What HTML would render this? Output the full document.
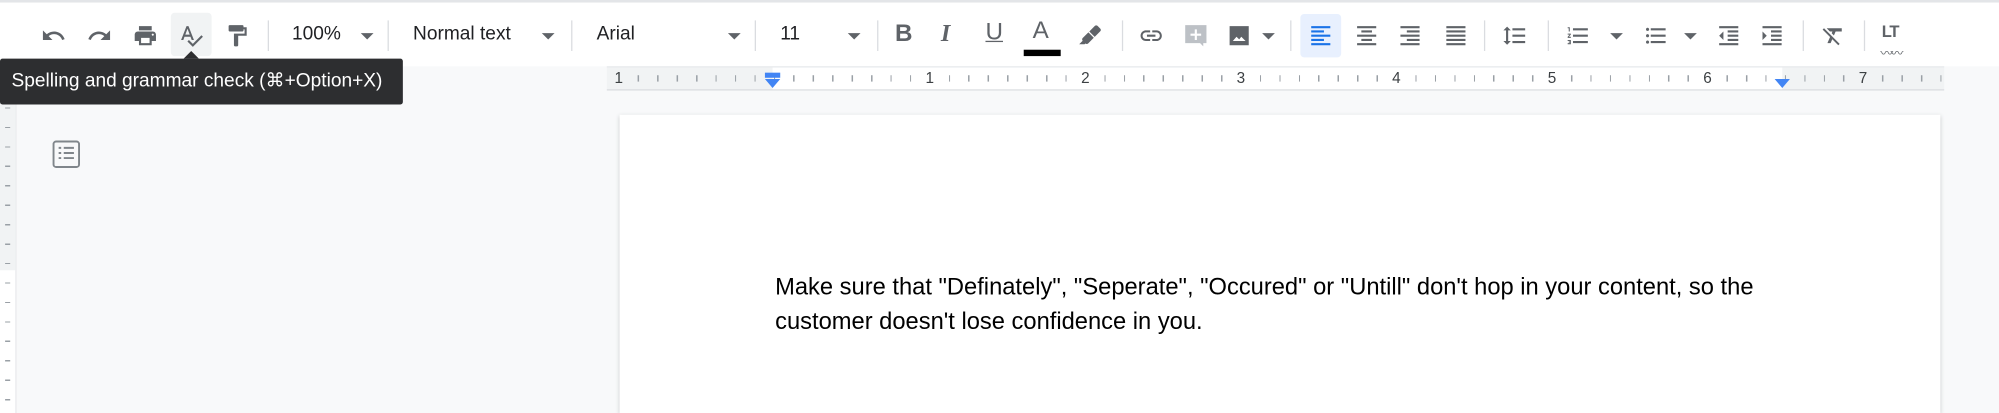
<!DOCTYPE html>
<html><head><meta charset="utf-8"><style>
html,body{margin:0;padding:0;width:1999px;height:413px;overflow:hidden;background:#f8f9fa;}
#w{position:absolute;left:0;top:0;width:1568px;height:324px;transform:scale(1.27487);transform-origin:0 0;font-family:"Liberation Sans",Arial,sans-serif;background:#f8f9fa;overflow:hidden}
.tb{position:absolute;left:0;top:0;width:1568px;height:52px;background:#fff;border-top:2px solid #e3e5e8;box-sizing:border-box}
.ic{position:absolute;top:16px;width:20px;height:20px;fill:#5f6368}
.sep{position:absolute;top:14px;width:1px;height:24px;background:#dadce0}
.t{position:absolute;top:16px;font-size:15px;color:#202124}
.dd{position:absolute;top:24px;width:0;height:0;border-left:5px solid transparent;border-right:5px solid transparent;border-top:5px solid #5f6368}
.ruler{position:absolute;top:52px;left:476px;width:1049px;height:17px;background:#f1f3f4;border-bottom:1px solid #dadce0;border-top:1px solid #e8eaed}
.rw{position:absolute;left:130px;top:0;width:792px;height:17px;background:#fff}
.ticks{position:absolute;left:0;top:6px;width:1049px;height:5px;background:repeating-linear-gradient(90deg,transparent 0,transparent 14.25px,#9aa0a6 14.25px,#9aa0a6 15.25px);background-position:10px 0}
.rl{position:absolute;top:1px;font-size:12px;color:#3c4043;background:inherit}
.page{position:absolute;left:486px;top:90px;width:1036px;height:234px;background:#fff;box-shadow:0 1px 3px rgba(60,64,67,.25)}
.txt{position:absolute;left:608px;top:211px;font-size:18.6px;line-height:27px;color:#000;width:900px}
.tip{position:absolute;left:0;top:46px;width:316px;height:36px;background:#2d2e30;color:#fff;font-size:15px;line-height:36px;padding-left:9px;box-sizing:border-box;border-radius:2px}
.tip:before{content:"";position:absolute;left:144px;top:-6px;border-left:6px solid transparent;border-right:6px solid transparent;border-bottom:6px solid #2d2e30}
</style></head><body><div id="w">
<div class="tb">
<svg class="ic" style="left:32px" viewBox="0 0 24 24"><path d="M12.5 8c-2.65 0-5.05.99-6.9 2.6L2 7v9h9l-3.62-3.62c1.39-1.16 3.16-1.88 5.12-1.88 3.54 0 6.55 2.31 7.6 5.5l2.37-.78C21.08 11.03 17.15 8 12.5 8z"/></svg>
<svg class="ic" style="left:68px" viewBox="0 0 24 24"><path d="M18.4 10.6C16.55 8.99 14.15 8 11.5 8c-4.65 0-8.58 3.03-9.96 7.22L3.9 16c1.05-3.19 4.05-5.5 7.6-5.5 1.95 0 3.73.72 5.12 1.88L13 16h9V7l-3.6 3.6z"/></svg>
<svg class="ic" style="left:104px" viewBox="0 0 24 24"><path d="M19 8H5c-1.66 0-3 1.34-3 3v6h4v4h12v-4h4v-6c0-1.66-1.34-3-3-3zm-3 11H8v-5h8v5zm3-7c-.55 0-1-.45-1-1s.45-1 1-1 1 .45 1 1-.45 1-1 1zm-1-9H6v4h12V3z"/></svg>
<div style="position:absolute;left:134px;top:8px;width:32px;height:34px;background:#f1f3f4;border-radius:3px"></div>
<svg class="ic" style="left:140px" viewBox="0 0 24 24"><path d="M12.45 16h2.09L9.43 3H7.57L2.46 16h2.09l1.12-3h5.64l1.14 3zm-6.02-5L8.5 5.48 10.57 11H6.43zm15.16.59l-8.09 8.09L9.83 16l-1.41 1.41 5.09 5.09L23 13l-1.41-1.41z"/></svg>
<svg class="ic" style="left:176px" viewBox="0 0 24 24"><path d="M18 4V3c0-.55-.45-1-1-1H5c-.55 0-1 .45-1 1v4c0 .55.45 1 1 1h12c.55 0 1-.45 1-1V6h1v4H9v11c0 .55.45 1 1 1h2c.55 0 1-.45 1-1v-9h8V4h-3z"/></svg>
<div class="sep" style="left:210px"></div>
<div class="t" style="left:229px">100%</div><div class="dd" style="left:283px"></div>
<div class="sep" style="left:304px"></div>
<div class="t" style="left:324px">Normal text</div><div class="dd" style="left:425px"></div>
<div class="sep" style="left:448px"></div>
<div class="t" style="left:468px">Arial</div><div class="dd" style="left:571px"></div>
<div class="sep" style="left:592px"></div>
<div class="t" style="left:612px">11</div><div class="dd" style="left:665px"></div>
<div class="sep" style="left:688px"></div>
<div class="t" style="left:702px;top:14px;font-size:19px;font-weight:bold;color:#5f6368">B</div>
<div class="t" style="left:738px;top:14px;font-size:19px;font-style:italic;font-family:'Liberation Serif',serif;font-weight:bold;color:#5f6368">I</div>
<div class="t" style="left:773px;top:13px;font-size:19px;color:#5f6368;text-decoration:underline">U</div>
<div class="t" style="left:810px;top:12px;font-size:19px;color:#5f6368">A</div>
<div style="position:absolute;left:803px;top:37px;width:29px;height:5px;background:#000"></div>
<svg class="ic" style="left:846px;width:18px;height:18px;top:17px" viewBox="0 0 24 24"><path d="M18.5 1.15c-.53 0-1.04.19-1.43.58l-5.81 5.82 5.65 5.65 5.82-5.81c.77-.78.77-2.04 0-2.83l-2.84-2.83c-.39-.39-.89-.58-1.39-.58zM10.3 8.5l-5.96 5.96c-.78.78-.78 2.04.02 2.85C3.14 18.54 1.9 19.77.67 21h5.66l.86-.86c.78.76 2.03.75 2.81-.02l5.95-5.96L10.3 8.5z"/></svg>
<div class="sep" style="left:880px"></div>
<svg class="ic" style="left:893px" viewBox="0 0 24 24"><path d="M3.9 12c0-1.71 1.39-3.1 3.1-3.1h4V7H7c-2.76 0-5 2.24-5 5s2.24 5 5 5h4v-1.9H7c-1.71 0-3.1-1.39-3.1-3.1zM8 13h8v-2H8v2zm9-6h-4v1.9h4c1.71 0 3.1 1.39 3.1 3.1s-1.39 3.1-3.1 3.1h-4V17h4c2.76 0 5-2.24 5-5s-2.24-5-5-5z"/></svg>
<svg class="ic" style="left:928px;fill:#bdc1c6" viewBox="0 0 24 24"><path d="M2 2h20v17h-3v3l-3-3H2z"/><path d="M11 6h2v4h4v2h-4v4h-2v-4H7v-2h4z" fill="#fff"/></svg>
<svg class="ic" style="left:962px" viewBox="0 0 24 24"><path d="M3 3h18v18H3z"/><path d="M6 17l3.5-4 2.5 2.5 2-2.5 4 4z" fill="#fff"/></svg>
<div class="dd" style="left:990px"></div>
<div class="sep" style="left:1012px"></div>
<div style="position:absolute;left:1020px;top:9px;width:32px;height:34px;background:#e8f0fe;border-radius:3px"></div>
<svg class="ic" style="left:1026px;fill:#1a73e8" viewBox="0 0 24 24"><path d="M3 3h18v2H3zM3 7h12v2H3zM3 11h18v2H3zM3 15h12v2H3zM3 19h18v2H3z"/></svg>
<svg class="ic" style="left:1062px" viewBox="0 0 24 24"><path d="M3 3h18v2H3zM7 7h10v2H7zM3 11h18v2H3zM7 15h10v2H7zM3 19h18v2H3z"/></svg>
<svg class="ic" style="left:1096px" viewBox="0 0 24 24"><path d="M3 3h18v2H3zM9 7h12v2H9zM3 11h18v2H3zM9 15h12v2H9zM3 19h18v2H3z"/></svg>
<svg class="ic" style="left:1132px" viewBox="0 0 24 24"><path d="M3 3h18v2H3zM3 7h18v2H3zM3 11h18v2H3zM3 15h18v2H3zM3 19h18v2H3z"/></svg>
<div class="sep" style="left:1164px"></div>
<svg class="ic" style="left:1178px" viewBox="0 0 24 24"><path d="M6 7h2.5L5 3.5 1.5 7H4v10H1.5L5 20.5 8.5 17H6V7zm4-2v2h12V5H10zm0 14h12v-2H10v2zm0-6h12v-2H10v2z"/></svg>
<div class="sep" style="left:1214px"></div>
<svg class="ic" style="left:1228px" viewBox="0 0 24 24"><path d="M2 17h2v.5H3v1h1v.5H2v1h3v-4H2v1zm1-9h1V4H2v1h1v3zm-1 3h1.8L2 13.1v.9h3v-1H3.2L5 10.9V10H2v1zm5-6v2h14V5H7zm0 14h14v-2H7v2zm0-6h14v-2H7v2z"/></svg>
<div class="dd" style="left:1263px"></div>
<svg class="ic" style="left:1289px" viewBox="0 0 24 24"><path d="M4 10.5c-.83 0-1.5.67-1.5 1.5s.67 1.5 1.5 1.5 1.5-.67 1.5-1.5-.67-1.5-1.5-1.5zm0-6c-.83 0-1.5.67-1.5 1.5S3.17 7.5 4 7.5 5.5 6.83 5.5 6 4.83 4.5 4 4.5zm0 12c-.83 0-1.5.68-1.5 1.5s.68 1.5 1.5 1.5 1.5-.68 1.5-1.5-.67-1.5-1.5-1.5zM7 19h14v-2H7v2zm0-6h14v-2H7v2zm0-8v2h14V5H7z"/></svg>
<div class="dd" style="left:1321px"></div>
<svg class="ic" style="left:1346px" viewBox="0 0 24 24"><path d="M11 17h10v-2H11v2zm-8-5l4 4V8l-4 4zm0 9h18v-2H3v2zM3 3v2h18V3H3zm8 6h10V7H11v2zm0 4h10v-2H11v2z"/></svg>
<svg class="ic" style="left:1380px" viewBox="0 0 24 24"><path d="M3 21h18v-2H3v2zM3 8v8l4-4-4-4zm8 9h10v-2H11v2zM3 3v2h18V3H3zm8 6h10V7H11v2zm0 4h10v-2H11v2z"/></svg>
<div class="sep" style="left:1414px"></div>
<svg class="ic" style="left:1428px" viewBox="0 0 24 24"><path d="M3.27 5L2 6.27l6.97 6.97L6.5 19h3l1.57-3.66L16.73 21 18 19.73 3.55 5.27 3.27 5zM6 5v.18L8.82 8h2.4l-.72 1.68 2.1 2.1L14.21 8H20V5H6z"/></svg>
<div class="sep" style="left:1462px"></div>
<div class="t" style="left:1476px;top:15px;font-size:13px;font-weight:bold;color:#5f6368;letter-spacing:-1px">LT</div>
<div style="position:absolute;left:1475px;top:31px;font-size:10px;color:#5f6368;letter-spacing:-2px">〰〰</div>
</div>
<div class="ruler">
<div class="rw"></div>
<div class="ticks"></div>
<div class="rl" style="left:6px;background:#f1f3f4">1</div>
<div class="rl" style="left:250px;background:#fff">1</div>
<div class="rl" style="left:372px;background:#fff">2</div>
<div class="rl" style="left:494px;background:#fff">3</div>
<div class="rl" style="left:616px;background:#fff">4</div>
<div class="rl" style="left:738px;background:#fff">5</div>
<div class="rl" style="left:860px;background:#fff">6</div>
<div class="rl" style="left:982px;background:#f1f3f4">7</div>
<div style="position:absolute;left:124px;top:4px;width:12px;height:4px;background:#4285f4"></div>
<div style="position:absolute;left:124px;top:9px;border-left:6px solid transparent;border-right:6px solid transparent;border-top:7px solid #4285f4"></div>
<div style="position:absolute;left:916px;top:9px;border-left:6px solid transparent;border-right:6px solid transparent;border-top:7px solid #4285f4"></div>
</div>
<div style="position:absolute;left:0;top:70px;width:12px;height:254px;background:#fff;border-right:1px solid #e8eaed"></div>
<div style="position:absolute;left:0;top:70px;width:12px;height:142px;background:#f1f3f4"></div>
<div style="position:absolute;left:4px;top:70px;width:4px;height:254px;background-image:repeating-linear-gradient(180deg,transparent 0,transparent 14.25px,#9aa0a6 14.25px,#9aa0a6 15.25px)"></div>
<svg style="position:absolute;left:41px;top:110px;width:22px;height:22px" viewBox="0 0 22 22"><rect x="1" y="1" width="20" height="20" rx="2" fill="none" stroke="#80868b" stroke-width="1.5"/><path d="M5 6h2M9 6h8M5 10h2M9 10h8M5 14h2M9 14h8" stroke="#80868b" stroke-width="1.5"/></svg>
<div class="page"></div>
<div class="txt">Make sure that "Definately", "Seperate", "Occured" or "Untill" don't hop in your content, so the<br>customer doesn't lose confidence in you.</div>
<div class="tip">Spelling and grammar check (⌘+Option+X)</div>
</div></body></html>
